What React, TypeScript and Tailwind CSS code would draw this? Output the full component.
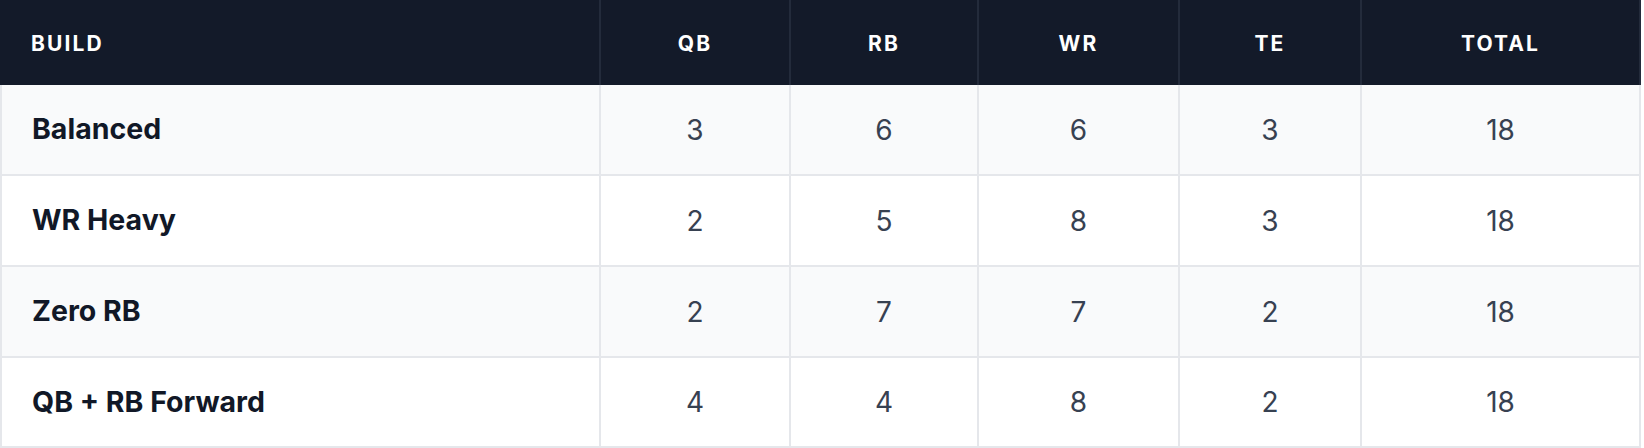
const rows = [
  { name: "Balanced", qb: 3, rb: 6, wr: 6, te: 3, total: 18 },
  { name: "WR Heavy", qb: 2, rb: 5, wr: 8, te: 3, total: 18 },
  { name: "Zero RB", qb: 2, rb: 7, wr: 7, te: 2, total: 18 },
  { name: "QB + RB Forward", qb: 4, rb: 4, wr: 8, te: 2, total: 18 },
];

const cols = "grid grid-cols-[599px_190px_188px_201px_182px_281px]";

export default function App() {
  return (
    <div className="w-[1644px] bg-white font-['Inter','Liberation_Sans',sans-serif]">
      <div className="w-[1641px]">
        {/* header */}
        <div className={`${cols} h-[85px] bg-[#131a29] text-white text-[21px] font-bold tracking-[0.1em] uppercase`}>
          <div className="flex items-center pl-[31px] pt-[2px]">Build</div>
          <div className="flex items-center justify-center pt-[2px] border-l-2 border-[#232b3b]">QB</div>
          <div className="flex items-center justify-center pt-[2px] border-l-2 border-[#232b3b]">RB</div>
          <div className="flex items-center justify-center pt-[2px] border-l-2 border-[#232b3b]">WR</div>
          <div className="flex items-center justify-center pt-[2px] border-l-2 border-[#232b3b]">TE</div>
          <div className="flex items-center justify-center pt-[2px] border-x-2 border-[#232b3b]">Total</div>
        </div>

        {rows.map((r, i) => (
          <div
            key={r.name}
            className={`${cols} ${i === rows.length - 1 ? "h-[90px]" : "h-[91px]"} border-b-2 border-[#e5e7eb] ${i % 2 === 0 ? "bg-[#f9fafb]" : "bg-white"}`}
          >
            <div className="flex items-center pl-[30px] border-l-2 border-[#e5e7eb] text-[28.5px] font-bold text-[#111827]">{r.name}</div>
            {[r.qb, r.rb, r.wr, r.te, r.total].map((v, j) => (
              <div
                key={j}
                className={`flex items-center justify-center border-l-2 border-[#e5e7eb] text-[28px] text-[#374151] ${j === 4 ? "border-r-2" : ""}`}
              >
                {v}
              </div>
            ))}
          </div>
        ))}
      </div>
    </div>
  );
}
